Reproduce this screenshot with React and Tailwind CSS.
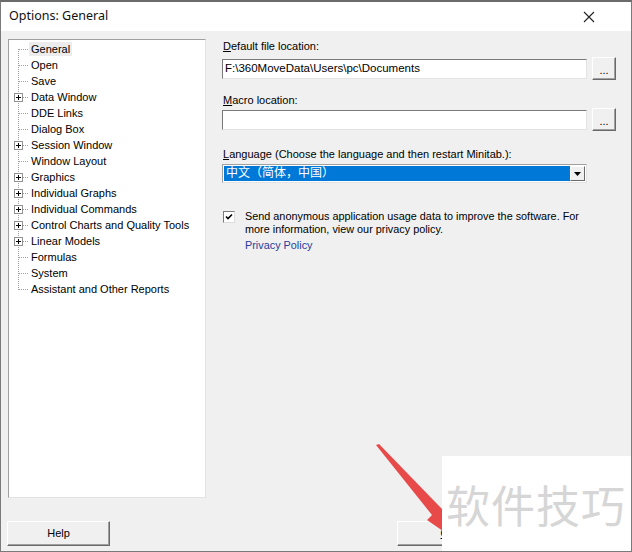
import React from 'react';

const items = [
  { label: 'General', selected: true },
  { label: 'Open' },
  { label: 'Save' },
  { label: 'Data Window', plus: true },
  { label: 'DDE Links' },
  { label: 'Dialog Box' },
  { label: 'Session Window', plus: true },
  { label: 'Window Layout' },
  { label: 'Graphics', plus: true },
  { label: 'Individual Graphs', plus: true },
  { label: 'Individual Commands', plus: true },
  { label: 'Control Charts and Quality Tools', plus: true },
  { label: 'Linear Models', plus: true },
  { label: 'Formulas' },
  { label: 'System' },
  { label: 'Assistant and Other Reports' },
];

export default function App() {
  return (
    <div className="relative w-[632px] h-[552px] overflow-hidden bg-[#f0f0f0] border-t-2 border-t-[#6b6b6b] border-l border-r border-b border-[#7a7a7a] font-['Liberation_Sans','Noto_Sans_CJK_SC',sans-serif] text-[11px] text-black">
      {/* title bar */}
      <div className="h-[29px] bg-white flex items-center justify-between pl-2 pr-9">
        <span className="text-[12.5px] font-['Noto_Sans',sans-serif] text-[#111]">Options: General</span>
        <svg width="12" height="12" viewBox="0 0 12 12">
          <path d="M1 1L11 11M11 1L1 11" stroke="#222" strokeWidth="1.1" />
        </svg>
      </div>

      {/* body */}
      <div className="flex flex-col pt-2">
        <div className="flex">
          <div className="ml-[7px] w-[198px] h-[459px] bg-white border border-t-[#a0a0a0] border-l-[#a0a0a0] border-b-[#e3e3e3] border-r-[#e3e3e3] pt-px">
            {items.map((it, i) => (
              <TreeRow key={it.label} {...it} first={i === 0} last={i === items.length - 1} />
            ))}
          </div>

          <div className="ml-4 flex flex-col">
            <Label u="D" rest="efault file location:" />
            <div className="mt-[4px] flex items-center">
              <Field>F:\360MoveData\Users\pc\Documents</Field>
              <Browse />
            </div>

            <div className="mt-[13px]">
              <Label u="M" rest="acro location:" />
            </div>
            <div className="mt-px flex items-center">
              <Field />
              <Browse />
            </div>

            <div className="mt-[16px]">
              <Label u="L" rest="anguage (Choose the language and then restart Minitab.):" />
            </div>
            <div className="mt-[3px] w-[365px] h-[19px] bg-white border border-t-[#a0a0a0] border-l-[#a0a0a0] border-b-[#e3e3e3] border-r-[#e3e3e3] flex items-center pl-px pr-px">
              <div className="flex-1 h-[15px] bg-[#0078d7] text-white text-[12px] leading-[15px] pl-[2px] font-['Liberation_Sans','Noto_Sans_CJK_SC',sans-serif]">
                中文（简体，中国）
              </div>
              <div className="w-[15px] h-[15px] bg-[#f0f0f0] border border-t-white border-l-white border-b-[#696969] border-r-[#696969] flex items-center justify-center">
                <svg width="7" height="4" viewBox="0 0 7 4">
                  <path d="M0 0H7L3.5 4Z" fill="#000" />
                </svg>
              </div>
            </div>

            <div className="mt-[27px] flex items-start">
              <div className="mt-[1px] ml-px w-[12px] h-[12px] bg-white border border-t-[#7a7a7a] border-l-[#7a7a7a] border-b-[#dcdcdc] border-r-[#dcdcdc] flex items-center justify-center">
                <svg width="8" height="8" viewBox="0 0 8 8">
                  <path d="M1 3.5L3 5.5L7 1.5" stroke="#000" strokeWidth="1.6" fill="none" />
                </svg>
              </div>
              <div className="ml-[10px] leading-[13px] text-[10.85px]">
                <div>Send anonymous application usage data to improve the software. For</div>
                <div>more information, view our privacy policy.</div>
                <div className="mt-[3px] text-[#2a3c9c]">Privacy Policy</div>
              </div>
            </div>
          </div>
        </div>

        <div className="mt-[23px] flex items-center">
          <Button className="ml-[6px]">Help</Button>
          <Button className="ml-[287px]">
            <span className="underline">O</span>K
          </Button>
        </div>
      </div>

      {/* red arrow annotation */}
      <svg className="absolute left-[370px] top-[440px]" width="90" height="100" viewBox="0 0 90 100">
        <polygon points="5,3 61,73 56,78 85,98 78,60 71,67 8,2" fill="#e84a4a" />
      </svg>

      {/* watermark */}
      <div className="absolute right-0 bottom-0 w-[189px] h-[95px] bg-white flex items-center pl-[4px]">
        <span className="text-[44px] leading-none text-[#d6d6d6] font-['Noto_Sans_CJK_SC',sans-serif] tracking-[1px]">软件技巧</span>
      </div>
    </div>
  );
}

function TreeRow({ label, plus, first, last, selected }) {
  return (
    <div className="flex h-4 items-center">
      <svg width="19" height="16" className="ml-px shrink-0">
        <line x1="8.5" y1={first ? 8 : 0} x2="8.5" y2={last ? 9 : 16} stroke="#a0a0a0" strokeDasharray="1 1" />
        <line x1="9" y1="8.5" x2="19" y2="8.5" stroke="#a0a0a0" strokeDasharray="1 1" />
        {plus && (
          <g>
            <rect x="4.5" y="4.5" width="8" height="8" fill="#fff" stroke="#919191" />
            <path d="M6 8.5H11M8.5 6V11" stroke="#000" />
          </g>
        )}
      </svg>
      <span className={`px-[2px] leading-[14px] ${selected ? 'bg-[#ececec]' : ''}`}>{label}</span>
    </div>
  );
}

function Label({ u, rest }) {
  return (
    <div className="leading-[14px] pl-px">
      <span className="underline">{u}</span>
      {rest}
    </div>
  );
}

function Field({ children }) {
  return (
    <div className="w-[365px] h-[20px] bg-white border border-t-[#7a7a7a] border-l-[#7a7a7a] border-b-[#e3e3e3] border-r-[#e3e3e3] pl-[2px] leading-[16px] text-[11.5px]">
      {children}
    </div>
  );
}

function Browse() {
  return (
    <div className="ml-[5px] w-[24px] h-[23px] bg-[#f0f0f0] border border-t-white border-l-white border-b-[#696969] border-r-[#696969] shadow-[inset_-1px_-1px_0_#a0a0a0] flex items-end justify-center pb-[3px] leading-none">
      ...
    </div>
  );
}

function Button({ children, className = '' }) {
  return (
    <div className={`w-[103px] h-[25px] bg-[#f0f0f0] border border-t-white border-l-white border-b-[#696969] border-r-[#696969] shadow-[inset_-1px_-1px_0_#a0a0a0] flex items-center justify-center ${className}`}>
      <span>{children}</span>
    </div>
  );
}
